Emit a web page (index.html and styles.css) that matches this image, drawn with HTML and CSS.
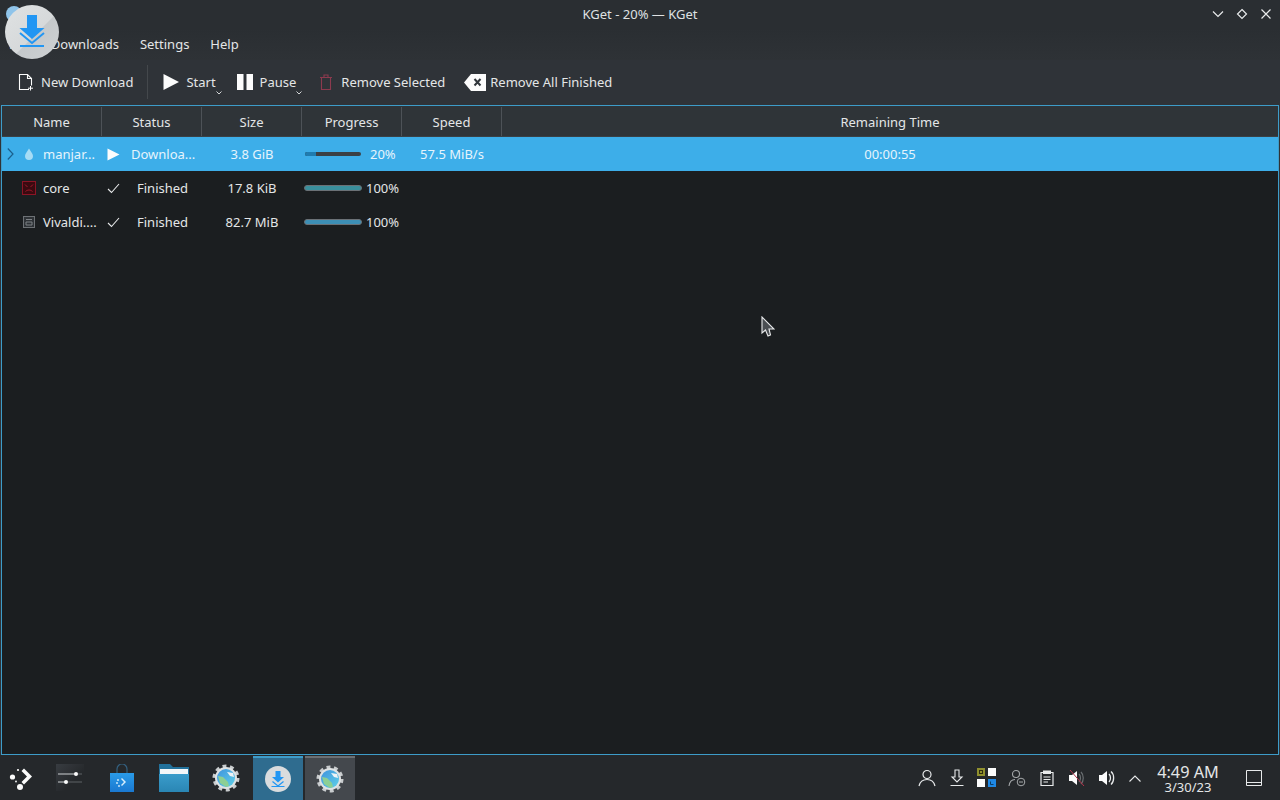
FILE: index.html
```html
<!DOCTYPE html>
<html lang="en">
<head>
    <meta charset="UTF-8">
    <title>KGet - 20% — KGet</title>
    <link rel="stylesheet" href="styles.css">
</head>
<body>
    <div class="desktop">
        <div class="titlebar">
            <svg class="window-icon" width="16" height="16" viewBox="0 0 16 16"><circle cx="8" cy="8" r="8" fill="#8fc4ea"/></svg>
            <span class="title">KGet - 20% — KGet</span>
            <div class="window-buttons">
                <svg width="12" height="12" viewBox="0 0 12 12"><path d="M1 3.500l5 5 5-5" fill="none" stroke="#e8eaeb" stroke-width="1.2"/></svg>
                <svg width="12" height="12" viewBox="0 0 12 12"><path d="M6 1.500l4.500 4.500-4.500 4.500-4.500-4.500z" fill="none" stroke="#e8eaeb" stroke-width="1.2"/></svg>
                <svg width="12" height="12" viewBox="0 0 12 12"><path d="M1.500 1.500l9 9m0-9l-9 9" fill="none" stroke="#e8eaeb" stroke-width="1.2"/></svg>
            </div>
        </div>

        <div class="menubar">
            <span class="menu-item">File</span>
            <span class="menu-item">Downloads</span>
            <span class="menu-item">Settings</span>
            <span class="menu-item">Help</span>
        </div>

        <div class="toolbar">
            <div class="tool tool-new">
                <svg width="16" height="18" viewBox="0 0 16 18"><path d="M11 16.500H1.500v-15h8l4 4v7M9.500 1.500v4h4" fill="none" stroke="#fcfcfc" stroke-width="1.1"/><path d="M12.500 13v4.500M10 15.200h5" stroke="#fcfcfc" stroke-width="1"/></svg>
                <span>New Download</span>
            </div>
            <div class="tool-separator"></div>
            <div class="tool tool-start">
                <svg width="16" height="16" viewBox="0 0 16 16"><path d="M0.500 0l15.500 8-15.500 8z" fill="#fcfcfc"/></svg>
                <span>Start</span>
                <svg class="tool-arrow" width="6" height="4" viewBox="0 0 6 4"><path d="M0.500 0.500L3 3l2.500-2.500" fill="none" stroke="#d5d7d8"/></svg>
            </div>
            <div class="tool tool-pause">
                <svg width="16" height="16" viewBox="0 0 16 16"><path d="M0 0h6.500v16H0zM9.500 0H16v16H9.500z" fill="#fcfcfc"/></svg>
                <span>Pause</span>
                <svg class="tool-arrow" width="6" height="4" viewBox="0 0 6 4"><path d="M0.500 0.500L3 3l2.500-2.500" fill="none" stroke="#d5d7d8"/></svg>
            </div>
            <div class="tool tool-remove">
                <svg width="14" height="16" viewBox="0 0 14 16"><path d="M1 3.500h12M5 3.500V1h4v2.500M2.500 3.500v12h9v-12" fill="none" stroke="#8c3a4e" stroke-width="1.1"/></svg>
                <span>Remove Selected</span>
            </div>
            <div class="tool tool-clear">
                <svg width="22" height="17" viewBox="0 0 22 17"><path d="M7 0h15v17H7L0 8.500z" fill="#fcfcfc"/><path d="M10.500 5l6 6.500m0-6.500l-6 6.500" stroke="#31363b" stroke-width="2"/></svg>
                <span>Remove All Finished</span>
            </div>
        </div>

        <div class="frame">
            <div class="row header-row">
                <div class="head-cell">Name</div>
                <div class="head-cell">Status</div>
                <div class="head-cell">Size</div>
                <div class="head-cell">Progress</div>
                <div class="head-cell">Speed</div>
                <div class="head-cell head-last">Remaining Time</div>
            </div>

            <div class="row item-row selected">
                <div class="cell name-cell">
                    <svg class="expander" width="7" height="12" viewBox="0 0 7 12"><path d="M0.800 0.500l5.200 5.500-5.200 5.500" fill="none" stroke="#1b5f8c" stroke-width="1.200"/></svg>
                    <svg class="file-icon" width="10" height="12" viewBox="0 0 10 12"><path d="M5 0.500C3.500 3.500 1 5.500 1 8a4 4 0 0 0 8 0C9 5.500 6.500 3.500 5 0.500z" fill="#a6dcf5"/></svg>
                    <span>manjar...</span>
                </div>
                <div class="cell status-cell">
                    <svg width="13" height="13" viewBox="0 0 13 13"><path d="M0.500 0.500l12 6-12 6z" fill="#fcfcfc"/></svg>
                    <span class="status-text">Downloa...</span>
                </div>
                <div class="cell center">3.8 GiB</div>
                <div class="cell progress-cell">
                    <div class="busy-bar"><div class="busy-fill" style="width: 20%"></div></div>
                    <span class="percent">20%</span>
                </div>
                <div class="cell center">57.5 MiB/s</div>
                <div class="cell center">00:00:55</div>
            </div>

            <div class="row item-row">
                <div class="cell name-cell">
                    <svg class="file-icon file-square" width="14" height="14" viewBox="0 0 14 14"><rect x="0.500" y="0.500" width="13" height="13" fill="#3a0a10" stroke="#8c1425"/><path d="M3 3.500l2.500 2.500M11 3.500L8.500 6M3.500 10.500c2-2 5-2 7 0" fill="none" stroke="#a3182b"/></svg>
                    <span>core</span>
                </div>
                <div class="cell status-cell">
                    <svg width="13" height="11" viewBox="0 0 13 11"><path d="M1 6l3.500 3.500L12 1" fill="none" stroke="#e8eaeb" stroke-width="1.100"/></svg>
                    <span class="status-text finished">Finished</span>
                </div>
                <div class="cell center">17.8 KiB</div>
                <div class="cell progress-cell">
                    <div class="full-bar teal"></div>
                    <span class="percent full">100%</span>
                </div>
                <div class="cell"></div>
                <div class="cell"></div>
            </div>

            <div class="row item-row">
                <div class="cell name-cell">
                    <svg class="file-icon file-square file-doc" width="12" height="12" viewBox="0 0 12 12"><rect x="0.500" y="0.500" width="11" height="11" fill="#2e3236" stroke="#6d7175"/><path d="M3 3.500h6M3 6h6v3H3z" fill="none" stroke="#7d8185"/></svg>
                    <span>Vivaldi....</span>
                </div>
                <div class="cell status-cell">
                    <svg width="13" height="11" viewBox="0 0 13 11"><path d="M1 6l3.500 3.500L12 1" fill="none" stroke="#e8eaeb" stroke-width="1.100"/></svg>
                    <span class="status-text finished">Finished</span>
                </div>
                <div class="cell center">82.7 MiB</div>
                <div class="cell progress-cell">
                    <div class="full-bar"></div>
                    <span class="percent full">100%</span>
                </div>
                <div class="cell"></div>
                <div class="cell"></div>
            </div>
        </div>

        <div class="taskbar">
            <div class="launcher">
                <svg width="26" height="26" viewBox="0 0 26 26"><path d="M15 3.500l8 8-8 8-2.500-2.500 5.500-5.500-5.500-5.500z" fill="#fcfcfc"/><circle cx="3.500" cy="12" r="2.600" fill="#fcfcfc"/><circle cx="11" cy="22" r="3" fill="#fcfcfc"/><circle cx="9" cy="5" r="1.100" fill="#fcfcfc"/><circle cx="7" cy="16.500" r="0.900" fill="#fcfcfc"/></svg>
            </div>
            <div class="task">
                <svg width="30" height="28" viewBox="0 0 30 28"><defs><linearGradient id="mixer" x1="0" y1="0" x2="1" y2="1"><stop offset="0" stop-color="#383c41"/><stop offset="0.650" stop-color="#25282b"/></linearGradient></defs><rect x="1" y="0" width="28" height="27" fill="url(#mixer)"/><path d="M3 10h24M3 18h24" stroke="#5f6367" stroke-width="1"/><path d="M3 10h18M3 18h8" stroke="#b5b8ba" stroke-width="1"/><circle cx="21" cy="10" r="2" fill="#fcfcfc"/><circle cx="11" cy="18" r="2" fill="#fcfcfc"/></svg>
            </div>
            <div class="task">
                <svg width="26" height="28" viewBox="0 0 26 28"><defs><linearGradient id="bag" x1="0" y1="0" x2="0" y2="1"><stop offset="0" stop-color="#2a9be8"/><stop offset="1" stop-color="#1a78d0"/></linearGradient></defs><path d="M8 9V5a5 5 0 0 1 10 0v4" fill="none" stroke="#33607f" stroke-width="1.200"/><path d="M1 9h24v19H1z" fill="url(#bag)"/><path d="M13 14l4 4-4 4-1-1 3-3-3-3z" fill="#d8eefc"/><circle cx="9" cy="16" r="0.900" fill="#d8eefc"/><circle cx="8" cy="19" r="0.900" fill="#d8eefc"/><circle cx="10" cy="22" r="0.900" fill="#d8eefc"/></svg>
            </div>
            <div class="task">
                <svg width="30" height="28" viewBox="0 0 30 28"><defs><linearGradient id="folder" x1="0" y1="0" x2="0" y2="1"><stop offset="0" stop-color="#3a9ccb"/><stop offset="1" stop-color="#2a86b4"/></linearGradient></defs><path d="M0 0h11l3 3h16v25H0z" fill="#22719b"/><path d="M1 5h28v5H1z" fill="#f4f7f9"/><path d="M0 10h30v18H0z" fill="url(#folder)"/></svg>
            </div>
            <div class="task">
                <svg width="28" height="28" viewBox="0 0 28 28"><defs><linearGradient id="earth" x1="0" y1="0" x2="1" y2="1"><stop offset="0" stop-color="#3f93dd"/><stop offset="1" stop-color="#5fd0e8"/></linearGradient></defs><circle cx="14" cy="14" r="11" fill="none" stroke="#c9ccce" stroke-width="5" stroke-dasharray="3.600 3.300"/><circle cx="14" cy="14" r="11" fill="#dfe2e3"/><circle cx="14" cy="14" r="9" fill="url(#earth)"/><path d="M6 12l5 1 5 5 1 4-3 1-6-4z" fill="#8ccf94"/><path d="M15 8l6 1 1 4-4-1z" fill="#eef3f6"/></svg>
            </div>
            <div class="task task-active">
                <svg width="26" height="26" viewBox="0 0 26 26"><circle cx="13" cy="13" r="13" fill="#d9dcde"/><path d="M10.500 5h5v6h3.500L13 16.500 7 11h3.500z" fill="#2196f3"/><path d="M7.500 15.500l5.500 4.500 5.500-4.500M6.500 20.500h13" fill="none" stroke="#2196f3" stroke-width="1.200"/></svg>
            </div>
            <div class="task task-open">
                <svg width="28" height="28" viewBox="0 0 28 28"><circle cx="14" cy="14" r="11" fill="none" stroke="#c9ccce" stroke-width="5" stroke-dasharray="3.600 3.300"/><circle cx="14" cy="14" r="11" fill="#dfe2e3"/><circle cx="14" cy="14" r="9" fill="url(#earth)"/><path d="M6 12l5 1 5 5 1 4-3 1-6-4z" fill="#8ccf94"/><path d="M15 8l6 1 1 4-4-1z" fill="#eef3f6"/></svg>
            </div>

            <div class="tray">
                <svg width="18" height="18" viewBox="0 0 18 18"><circle cx="9" cy="5.500" r="4" fill="none" stroke="#e8eaeb" stroke-width="1.200"/><path d="M1 17c1-4.500 4-6.500 8-6.500s7 2 8 6.500" fill="none" stroke="#e8eaeb" stroke-width="1.200"/></svg>
                <svg width="14" height="18" viewBox="0 0 14 18"><path d="M5 1h4v7h3L7 13 2 8h3zM0.500 16.500h13" fill="none" stroke="#e8eaeb" stroke-width="1.100"/></svg>
                <svg width="20" height="20" viewBox="0 0 20 20"><rect x="0" y="0" width="8" height="8" fill="#8f8f2e"/><rect x="2.500" y="2.500" width="3" height="3" fill="none" stroke="#2e2e12"/><rect x="11" y="0" width="8" height="8" fill="#fcfcfc"/><rect x="0" y="11" width="8" height="8" fill="#fcfcfc"/><rect x="11" y="11" width="8" height="8" fill="#1e88e5"/><path d="M13.500 13.500v3h3" fill="none" stroke="#0c3d66"/></svg>
                <svg width="18" height="18" viewBox="0 0 18 18"><circle cx="8" cy="5" r="3.500" fill="none" stroke="#a4a7a9" stroke-width="1.100"/><path d="M1 17c.5-4 3-6.500 6-6.500" fill="none" stroke="#a4a7a9" stroke-width="1.100"/><circle cx="13" cy="13" r="3.800" fill="none" stroke="#a4a7a9"/><path d="M11 13h4" stroke="#a4a7a9"/></svg>
                <svg width="14" height="16" viewBox="0 0 14 16"><path d="M1 2.500h12v13H1z" fill="none" stroke="#e8eaeb" stroke-width="1.200"/><path d="M3 0.500h8v3.500H3z" fill="#e8eaeb"/><path d="M3.500 7h7M3.500 9.500h7M3.500 12h4.500" stroke="#e8eaeb"/></svg>
                <svg width="18" height="18" viewBox="0 0 18 18"><path d="M1 6h3l5-4v14l-5-4H1z" fill="#fcfcfc"/><path d="M11 5c2 2 2 6 0 8M13 3c3 3 3 9 0 12" fill="none" stroke="#6b6f72" stroke-width="1.200"/><path d="M2 1l14 16" stroke="#b3324a" stroke-width="1"/></svg>
                <svg width="18" height="18" viewBox="0 0 18 18"><path d="M1 6h3l5-4v14l-5-4H1z" fill="#fcfcfc"/><path d="M11 5c2 2 2 6 0 8M13 2.500c3.500 3 3.500 10 0 13" fill="none" stroke="#e8eaeb" stroke-width="1.300"/></svg>
                <svg class="tray-more" width="12" height="7" viewBox="0 0 12 7"><path d="M0.500 6.500L6 1l5.500 5.500" fill="none" stroke="#e8eaeb" stroke-width="1.100"/></svg>
            </div>
            <div class="clock">
                <div class="clock-time">4:49 AM</div>
                <div class="clock-date">3/30/23</div>
            </div>
            <div class="show-desktop">
                <svg width="16" height="16" viewBox="0 0 16 16"><path d="M0.500 0.500h15v15H0.500zM0.500 12.500h15" fill="none" stroke="#e8eaeb"/></svg>
            </div>
        </div>

        <svg class="drag-icon" width="54" height="54" viewBox="0 0 54 54">
            <defs><linearGradient id="disc" x1="0" y1="0" x2="1" y2="1"><stop offset="0" stop-color="#dfe2e3"/><stop offset="0.550" stop-color="#d6d9da"/><stop offset="0.560" stop-color="#c5c9cb"/><stop offset="1" stop-color="#cfd2d4"/></linearGradient></defs>
            <circle cx="27" cy="27" r="27" fill="url(#disc)"/>
            <path d="M22 10h10v13h7.500L27 34 14.500 23H22z" fill="#2196f3"/>
            <path d="M15 28l12 10 12-10M15 41h24" fill="none" stroke="#2196f3" stroke-width="2"/>
        </svg>
        <svg class="cursor" width="14" height="22" viewBox="0 0 14 22"><path d="M1 1v16l3.500-3 2.500 6 2.500-1-1.500-6h5z" fill="#4a4e52" stroke="#e8eaeb" stroke-width="1.100"/></svg>
    </div>
</body>
</html>
```

FILE: styles.css
```css
body {
    margin: 0;
    font-family: "Noto Sans", sans-serif;
    font-size: 13px;
    color: #e4e6e7;
    background: #1b1e20;
}
.desktop {
    position: relative;
    width: 1280px;
    height: 800px;
    overflow: hidden;
    display: flex;
    flex-direction: column;
    background: #2f3338;
}

/* window chrome */
.titlebar {
    height: 29px;
    box-sizing: border-box;
    padding-bottom: 2px;
    display: flex;
    align-items: center;
    justify-content: center;
    position: relative;
    background: #2a2e32;
}
.window-icon {
    position: absolute;
    left: 6px;
    top: 6px;
}
.title {
    color: #dfe1e2;
}
.window-buttons {
    position: absolute;
    right: 8px;
    top: 8px;
    display: flex;
    gap: 12px;
}
.menubar {
    height: 31px;
    box-sizing: border-box;
    padding-bottom: 2px;
    display: flex;
    align-items: center;
    background: linear-gradient(#2a2e32, #2e3236);
}
.menu-item {
    padding: 0 10.5px;
}
.menu-item:first-child {
    padding-left: 9px;
}
.toolbar {
    height: 45px;
    box-sizing: border-box;
    display: flex;
    align-items: center;
    padding: 0 0 1px 18px;
    background: #2f3338;
}
.tool {
    display: flex;
    align-items: center;
    position: relative;
}
.tool-new svg {
    margin-right: 7px;
}
.tool-separator {
    width: 1px;
    height: 34px;
    margin: 0 15px 0 14px;
    background: #44484c;
}
.tool-start svg:first-child {
    margin-right: 7px;
}
.tool-pause {
    margin-left: 21px;
}
.tool-pause svg:first-child {
    margin-right: 7px;
}
.tool-remove {
    margin-left: 23px;
}
.tool-remove svg {
    margin-right: 8px;
}
.tool-clear {
    margin-left: 19px;
}
.tool-clear svg {
    margin-right: 4px;
}
.tool .tool-arrow {
    position: absolute;
    right: -6px;
    bottom: -4px;
    margin: 0;
}

/* transfer list */
.frame {
    flex: 1;
    margin: 0 1px;
    border: 1px solid #3d9cc9;
    background: #1b1e20;
}
.row {
    display: grid;
    grid-template-columns: 100px 100px 100px 100px 100px 1fr;
}
.header-row {
    height: 31px;
    box-sizing: border-box;
    background: #2f3438;
    border-bottom: 1px solid #3a4045;
}
.head-cell {
    display: flex;
    align-items: center;
    justify-content: center;
    border-right: 1px solid #4d5257;
    margin: 1px 0 0;
}
.head-last {
    border-right: none;
}
.item-row {
    height: 34px;
}
.selected {
    background: #3daee9;
    color: #e6f4fc;
}
.cell {
    display: flex;
    align-items: center;
    min-width: 0;
    white-space: nowrap;
}
.center {
    justify-content: center;
}
.name-cell {
    position: relative;
    padding-left: 41px;
}
.expander {
    position: absolute;
    left: 5px;
    top: 11px;
}
.file-icon {
    position: absolute;
    left: 22px;
    top: 11px;
}
.file-square {
    left: 20px;
    top: 10px;
}
.file-doc {
    left: 21px;
    top: 11px;
}
.status-cell {
    padding-left: 5px;
}
.status-text {
    margin-left: 11px;
}
.finished {
    margin-left: 17px;
}
.progress-cell {
    padding-left: 2px;
}
.busy-bar {
    width: 56px;
    height: 4px;
    margin-left: 1px;
    border-radius: 2px;
    background: #3b4045;
    overflow: hidden;
}
.busy-fill {
    height: 100%;
    background: #1f7cb0;
}
.percent {
    margin-left: 9px;
}
.percent.full {
    margin-left: 4px;
}
.full-bar {
    width: 56px;
    height: 4px;
    border: 1px solid #6b7176;
    border-radius: 3px;
    background: #3d8fb5;
}
.teal {
    background: #3a8f9c;
}

/* panel */
.taskbar {
    height: 45px;
    flex-shrink: 0;
    box-sizing: border-box;
    padding-top: 1px;
    display: flex;
    align-items: stretch;
    background: #25282b;
}
.launcher {
    width: 44px;
    display: flex;
    align-items: center;
    justify-content: center;
}
.task {
    width: 50px;
    margin-right: 2px;
    display: flex;
    align-items: center;
    justify-content: center;
    box-sizing: border-box;
}
.launcher + .task {
    margin-left: 1px;
}
.task-active {
    background: #2f6c8f;
    border-top: 2px solid #3d9cc9;
}
.task-open {
    background: #44484d;
    border-top: 2px solid #6b6f73;
}
.tray {
    margin-left: auto;
    display: grid;
    grid-template-columns: repeat(8, 30px);
    justify-items: center;
    align-items: center;
}
.tray-more {
    margin-left: -4px;
}
.clock {
    width: 76px;
    box-sizing: border-box;
    padding-right: 4px;
    text-align: center;
    align-self: center;
    padding-top: 2px;
}
.clock-time {
    font-size: 16.3px;
    line-height: 16px;
}
.clock-date {
    font-size: 13px;
    line-height: 14px;
}
.show-desktop {
    width: 52px;
    display: flex;
    align-items: center;
    justify-content: center;
}

/* things lying over the window */
.drag-icon {
    position: absolute;
    left: 5px;
    top: 5px;
}
.cursor {
    position: absolute;
    left: 761px;
    top: 316px;
}
```
